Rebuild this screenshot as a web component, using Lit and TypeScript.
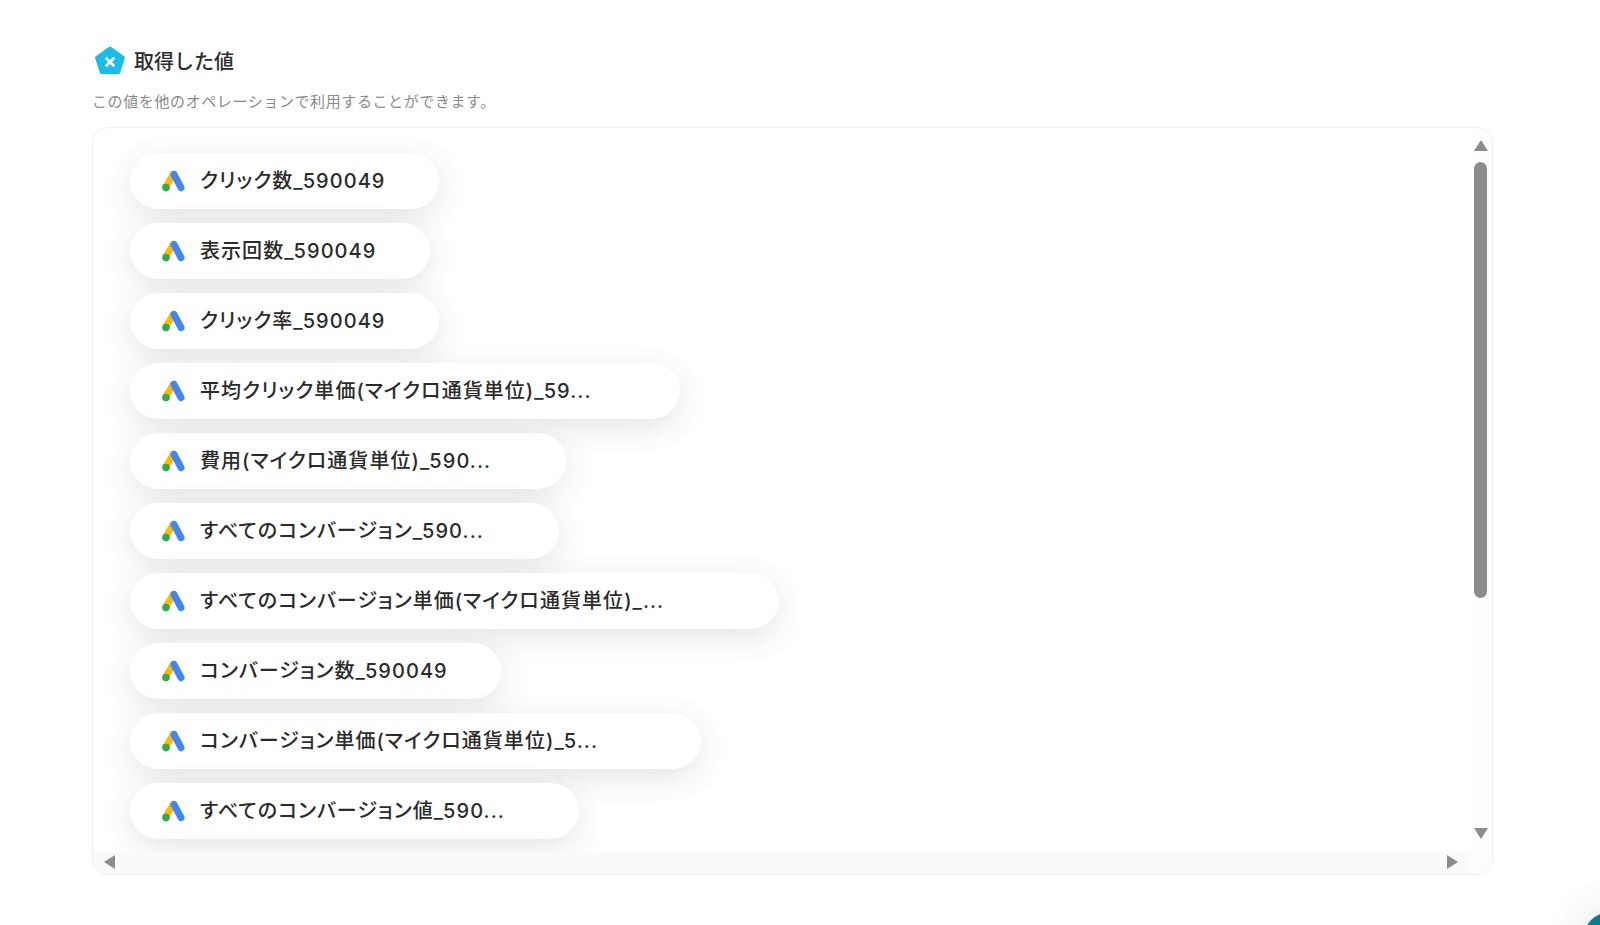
import { LitElement, css, html } from "lit";
import { customElement } from "lit/decorators.js";

const items = [
  { label: "クリック数_590049", width: 309 },
  { label: "表示回数_590049", width: 300 },
  { label: "クリック率_590049", width: 309 },
  { label: "平均クリック単価(マイクロ通貨単位)_59...", width: 550 },
  { label: "費用(マイクロ通貨単位)_590...", width: 436 },
  { label: "すべてのコンバージョン_590...", width: 429 },
  { label: "すべてのコンバージョン単価(マイクロ通貨単位)_...", width: 649 },
  { label: "コンバージョン数_590049", width: 371 },
  { label: "コンバージョン単価(マイクロ通貨単位)_5...", width: 571 },
  { label: "すべてのコンバージョン値_590...", width: 449 },
];

const adsIcon = html`
  <svg class="ads" viewBox="0 0 24 24" width="24" height="24">
    <path d="M12.5 5 L5 17.5" stroke="#fbbc04" stroke-width="6.8" stroke-linecap="round" fill="none"></path>
    <path d="M13 5.4 L20 18.6" stroke="#4285f4" stroke-width="7" stroke-linecap="round" fill="none"></path>
    <circle cx="5" cy="18.6" r="3.8" fill="#34a853"></circle>
  </svg>
`;

@customElement("app-root")
export class AppRoot extends LitElement {
  render() {
    return html`
      <div class="page">
        <div class="title">
          <svg class="logo" viewBox="0 0 32 32" width="32" height="32">
            <path
              d="M16 3 L29.5 12.6 L24.6 27.6 L7.4 27.6 L2.5 12.6 Z"
              fill="#19bde8"
              stroke="#19bde8"
              stroke-width="3"
              stroke-linejoin="round"
            ></path>
            <path d="M12.5 13.5 L19.5 20.5 M19.5 13.5 L12.5 20.5" stroke="#fff" stroke-width="2.6" stroke-linecap="round"></path>
          </svg>
          <span>取得した値</span>
        </div>
        <p class="note">この値を他のオペレーションで利用することができます。</p>
        <div class="box">
          <div class="list">
            ${items.map(
              (item) => html`
                <div class="pill" style="width:${item.width}px">${adsIcon}<span>${item.label}</span></div>
              `
            )}
          </div>
          <div class="vbar">
            <i class="arrow up"></i>
            <div class="vtrack"><div class="thumb"></div></div>
            <i class="arrow down"></i>
          </div>
          <div class="hbar">
            <i class="arrow left"></i>
            <i class="arrow right"></i>
          </div>
          <div class="corner"></div>
        </div>
      </div>
      <div class="teal"></div>
    `;
  }

  static styles = css`
    :host {
      display: block;
      position: relative;
      height: 925px;
      overflow: hidden;
      background: #fff;
      color: #2b2b2b;
      font-family: Inter, "Noto Sans CJK JP", sans-serif;
    }

    .page {
      padding: 44px 107px 0 92px;
    }

    .title {
      display: flex;
      align-items: center;
      gap: 8px;
      padding-left: 2px;
      height: 32px;
      font-size: 20px;
      font-weight: 500;
    }

    .logo {
      flex: none;
      margin-top: 2px;
    }

    .note {
      margin: 15px 0 0;
      height: 22px;
      line-height: 22px;
      font-size: 15px;
      letter-spacing: 0.6px;
      color: #8a8a8a;
    }

    .box {
      display: grid;
      grid-template-columns: 1fr 22px;
      grid-template-rows: 1fr 22px;
      box-sizing: border-box;
      margin-top: 14px;
      height: 748px;
      border: 1px solid #f0f0f0;
      border-radius: 16px;
      overflow: hidden;
    }

    .list {
      display: flex;
      flex-direction: column;
      align-items: flex-start;
      gap: 14px;
      padding: 25px 0 0 37px;
      overflow: hidden;
      min-height: 0;
    }

    .pill {
      display: flex;
      flex: none;
      align-items: center;
      gap: 15px;
      box-sizing: border-box;
      height: 56px;
      padding-left: 31px;
      border-radius: 28px;
      background: #fff;
      box-shadow: 0 8px 32px rgba(0, 0, 0, 0.11);
      font-size: 20px;
      font-weight: 500;
      letter-spacing: 1.05px;
      font-feature-settings: "palt";
      line-height: 52px;
      white-space: nowrap;
    }

    .pill span {
      margin-bottom: 1px;
    }

    .ads {
      flex: none;
    }

    .vbar {
      display: flex;
      flex-direction: column;
      align-items: center;
      background: #fdfdfd;
      padding: 12px 1px 13px 0;
    }

    .vtrack {
      flex: 1;
      padding-top: 11px;
    }

    .thumb {
      width: 13px;
      height: 436px;
      border-radius: 7px;
      background: #8c8c8c;
    }

    .hbar {
      display: flex;
      align-items: center;
      justify-content: space-between;
      padding: 0 12px 2px 11px;
      background: #fafafa;
    }

    .corner {
      background: #fdfdfd;
    }

    .arrow {
      display: block;
      flex: none;
      width: 0;
      height: 0;
      border-style: solid;
      border-color: transparent;
    }

    .up {
      border-width: 0 7px 11px;
      border-bottom-color: #8c8c8c;
    }

    .down {
      border-width: 11px 7px 0;
      border-top-color: #8c8c8c;
    }

    .left {
      border-width: 7px 11px 7px 0;
      border-right-color: #8c8c8c;
    }

    .right {
      border-width: 7px 0 7px 11px;
      border-left-color: #8c8c8c;
    }

    .teal {
      position: absolute;
      right: -32px;
      bottom: -36px;
      width: 48px;
      height: 48px;
      border-radius: 50%;
      background: #0b7a8c;
      box-shadow: 0 0 40px rgba(0, 0, 0, 0.15);
    }
  `;
}
